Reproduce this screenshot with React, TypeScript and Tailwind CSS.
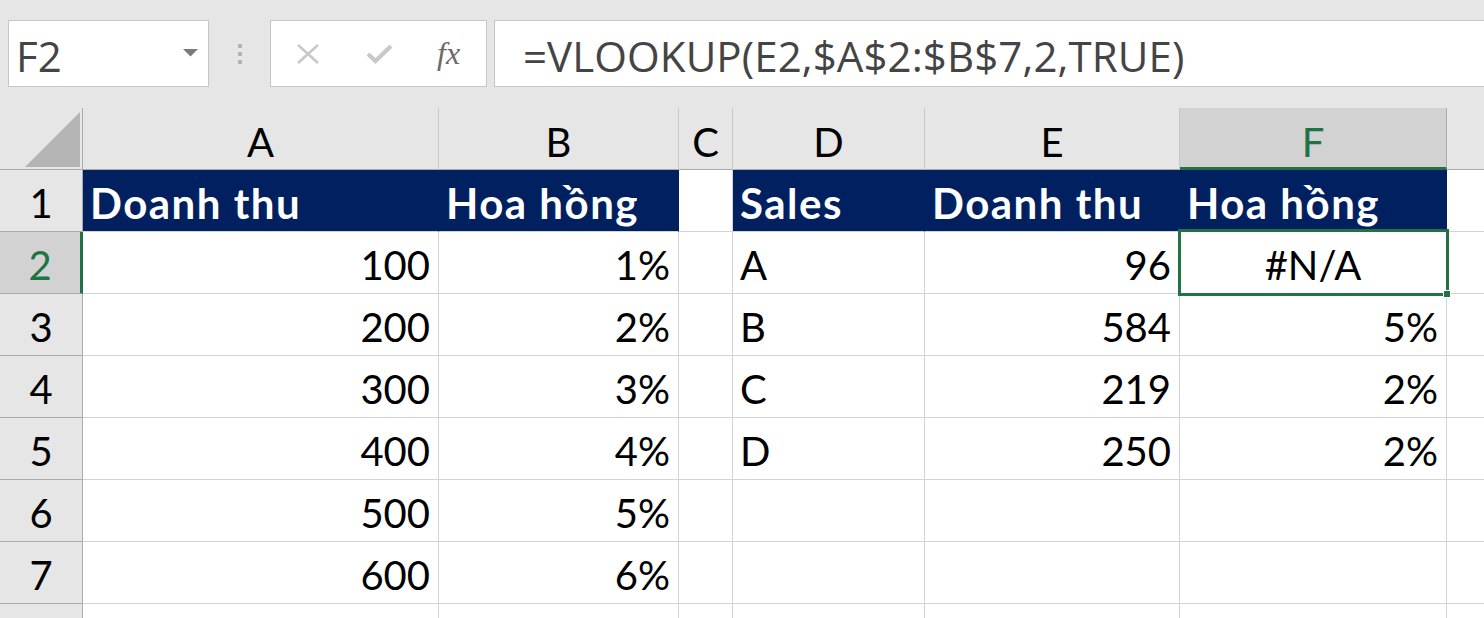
import React from "react";

const NAVY = "bg-[#002060]";

type Cell = {
  text?: string;
  align?: "left" | "right" | "center";
  header?: boolean;
};

const rows: Cell[][] = [
  [
    { text: "Doanh thu", header: true },
    { text: "Hoa hồng", header: true },
    {},
    { text: "Sales", header: true },
    { text: "Doanh thu", header: true },
    { text: "Hoa hồng", header: true },
  ],
  [
    { text: "100", align: "right" },
    { text: "1%", align: "right" },
    {},
    { text: "A" },
    { text: "96", align: "right" },
    { text: "#N/A", align: "center" },
  ],
  [
    { text: "200", align: "right" },
    { text: "2%", align: "right" },
    {},
    { text: "B" },
    { text: "584", align: "right" },
    { text: "5%", align: "right" },
  ],
  [
    { text: "300", align: "right" },
    { text: "3%", align: "right" },
    {},
    { text: "C" },
    { text: "219", align: "right" },
    { text: "2%", align: "right" },
  ],
  [
    { text: "400", align: "right" },
    { text: "4%", align: "right" },
    {},
    { text: "D" },
    { text: "250", align: "right" },
    { text: "2%", align: "right" },
  ],
  [{ text: "500", align: "right" }, { text: "5%", align: "right" }, {}, {}, {}, {}],
  [{ text: "600", align: "right" }, { text: "6%", align: "right" }, {}, {}, {}, {}],
  [{}, {}, {}, {}, {}, {}],
];

const cols = ["A", "B", "C", "D", "E", "F"];

function DataCell({ cell }: { cell: Cell }) {
  const justify =
    cell.align === "right"
      ? "justify-end pr-[8px]"
      : cell.align === "center"
      ? "justify-center"
      : "justify-start pl-[7px]";
  const base = cell.header
    ? `${NAVY} text-white font-bold text-[42px] tracking-[1.5px] pb-[7px] border-r border-r-[#002060] border-b border-b-[#d4d4d4]`
    : "bg-white text-black text-[40px] pb-[8px] border-r border-b border-[#d4d4d4]";
  return (
    <div
      className={`h-[62px] flex items-end overflow-hidden whitespace-nowrap leading-none ${justify} ${base}`}
    >
      {cell.text}
    </div>
  );
}

export default function App() {
  return (
    <div
      className="w-[1484px] h-[618px] overflow-hidden bg-white relative"
      style={{ fontFamily: "Lato, 'Open Sans', sans-serif" }}
    >
      {/* Formula bar */}
      <div className="h-[108px] bg-[#e6e6e6] flex items-start pt-[20px] pl-[8px]">
        <div className="w-[201px] h-[67px] bg-white border border-[#c6c6c6] flex items-center justify-between pl-[7px] pr-[10px]">
          <span
            className="text-[42px] leading-none text-[#444444] pt-[4px]"
            style={{ fontFamily: "'Open Sans', sans-serif" }}
          >
            F2
          </span>
          <svg width="15" height="8" viewBox="0 0 15 8" className="mt-[-1px]">
            <path d="M0 0 L15 0 L7.5 7.5 Z" fill="#7a7a7a" />
          </svg>
        </div>
        <div className="w-[61px] h-[67px] flex flex-col items-center justify-center gap-[4px] pl-[1px]">
          <div className="w-[4px] h-[4px] bg-[#b3b3b3]" />
          <div className="w-[4px] h-[4px] bg-[#b3b3b3]" />
          <div className="w-[4px] h-[4px] bg-[#b3b3b3]" />
        </div>
        <div className="w-[217px] h-[67px] bg-white border border-[#c6c6c6] flex items-center pl-[25px]">
          <svg width="24" height="20" viewBox="0 0 24 20">
            <path d="M2 1 L22 19 M22 1 L2 19" stroke="#c8c8c8" strokeWidth="2.6" fill="none" />
          </svg>
          <svg width="27" height="22" viewBox="0 0 27 22" className="ml-[46px]">
            <path d="M2 11 L9.5 18 L25 3" stroke="#c8c8c8" strokeWidth="4.2" fill="none" />
          </svg>
          <span
            className="ml-[44px] text-[32px] italic leading-none text-[#6a6a6a] pb-[2px]"
            style={{ fontFamily: "'Liberation Serif', serif" }}
          >
            fx
          </span>
        </div>
        <div className="flex-1 -mr-[4px] ml-[7px] h-[67px] bg-white border border-[#c6c6c6] flex items-center pl-[28px]">
          <span
            className="text-[42px] leading-none text-[#444444] pt-[4px] whitespace-nowrap tracking-[0.1px]"
            style={{ fontFamily: "'Open Sans', sans-serif" }}
          >
            =VLOOKUP(E2,$A$2:$B$7,2,TRUE)
          </span>
        </div>
      </div>

      {/* Grid */}
      <div className="relative">
        <div className="grid grid-cols-[83px_356px_240px_54px_192px_255px_267px_1fr]">
          {/* Corner */}
          <div className="h-[62px] bg-[#e6e6e6] border-r border-b border-[#ababab] flex items-end justify-end pr-[2px] pb-[2px]">
            <svg width="55" height="55" viewBox="0 0 55 55">
              <path d="M0 55 L55 55 L55 0 Z" fill="#b4b4b4" />
            </svg>
          </div>
          {cols.map((c) =>
            c === "F" ? (
              <div
                key={c}
                className="h-[62px] bg-[#d2d2d2] border-r border-r-[#ababab] border-b-[3px] border-b-[#217346] flex items-end justify-center pb-[5px] text-[40px] leading-none text-[#217346]"
              >
                {c}
              </div>
            ) : (
              <div
                key={c}
                className="h-[62px] bg-[#e6e6e6] border-r border-r-[#c8c8c8] border-b border-b-[#ababab] flex items-end justify-center pb-[7px] text-[40px] leading-none text-black"
              >
                {c}
              </div>
            )
          )}
          <div className="h-[62px] bg-[#e6e6e6] border-b border-b-[#ababab]" />

          {rows.map((r, i) => (
            <React.Fragment key={i}>
              {i === 1 ? (
                <div className="h-[62px] bg-[#d2d2d2] border-r-[3px] border-r-[#217346] border-b border-b-[#ababab] flex items-end justify-center pb-[8px] text-[40px] leading-none text-[#217346]">
                  {i + 1}
                </div>
              ) : (
                <div className="h-[62px] bg-[#e6e6e6] border-r border-r-[#ababab] border-b border-b-[#ababab] flex items-end justify-center pb-[8px] text-[40px] leading-none text-black">
                  {i < 7 ? i + 1 : ""}
                </div>
              )}
              {r.map((cell, j) => (
                <DataCell key={j} cell={cell} />
              ))}
              <div className="h-[62px] bg-white border-b border-[#d4d4d4]" />
            </React.Fragment>
          ))}
        </div>

        {/* Selection overlay on F2 */}
        <div className="absolute left-[1178px] top-[121px] w-[271px] h-[67px] border-[3px] border-[#217346] pointer-events-none">
          <div className="absolute -right-[5px] -bottom-[5px] w-[8px] h-[8px] bg-[#217346] border border-white" />
        </div>
      </div>
    </div>
  );
}
